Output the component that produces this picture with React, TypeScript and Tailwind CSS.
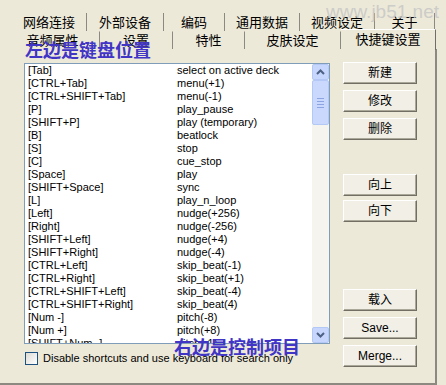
import React from 'react'

const rows: [string, string][] = [
  ['[Tab]', 'select on active deck'],
  ['[CTRL+Tab]', 'menu(+1)'],
  ['[CTRL+SHIFT+Tab]', 'menu(-1)'],
  ['[P]', 'play_pause'],
  ['[SHIFT+P]', 'play (temporary)'],
  ['[B]', 'beatlock'],
  ['[S]', 'stop'],
  ['[C]', 'cue_stop'],
  ['[Space]', 'play'],
  ['[SHIFT+Space]', 'sync'],
  ['[L]', 'play_n_loop'],
  ['[Left]', 'nudge(+256)'],
  ['[Right]', 'nudge(-256)'],
  ['[SHIFT+Left]', 'nudge(+4)'],
  ['[SHIFT+Right]', 'nudge(-4)'],
  ['[CTRL+Left]', 'skip_beat(-1)'],
  ['[CTRL+Right]', 'skip_beat(+1)'],
  ['[CTRL+SHIFT+Left]', 'skip_beat(-4)'],
  ['[CTRL+SHIFT+Right]', 'skip_beat(4)'],
  ['[Num -]', 'pitch(-8)'],
  ['[Num +]', 'pitch(+8)'],
  ['[SHIFT+Num -]', 'pitch(-1)'],
]

const topTabs: [string, string][] = [
  ['网络连接', 'w-[75px]'],
  ['外部设备', 'w-[77px]'],
  ['编码', 'w-[61px]'],
  ['通用数据', 'w-[75px]'],
  ['视频设定', 'w-[75px]'],
  ['关于', 'w-[60px]'],
]

const lowTabs: [string, string][] = [
  ['音频属性', 'w-[94px]'],
  ['设置', 'w-[73px]'],
  ['特性', 'w-[72px]'],
  ['皮肤设定', 'w-[96px]'],
]

function XpButton({ label, className = '' }: { label: string; className?: string }) {
  return (
    <div
      className={`flex h-[22px] w-[74px] items-center justify-center border border-t-white border-l-white border-r-[#716F64] border-b-[#716F64] bg-[#F1EFE6] text-[12px] text-black shadow-[inset_-1px_-1px_0_#ACA899] ${className}`}
    >
      {label}
    </div>
  )
}

function Chevron({ up }: { up: boolean }) {
  return (
    <svg width="9" height="6" viewBox="0 0 9 6">
      <path d={up ? 'M1 5 L4.5 1.5 L8 5' : 'M1 1 L4.5 4.5 L8 1'} fill="none" stroke="#4D6185" strokeWidth="2" />
    </svg>
  )
}

export default function App() {
  return (
    <div
      className="relative h-[385px] w-[446px] overflow-hidden bg-[#ECE9D8] text-black"
      style={{ fontFamily: '"Liberation Sans", "Noto Sans CJK SC", sans-serif' }}
    >
      {/* back row of tabs */}
      <div className="flex pl-[12px] pt-[13px]">
        {topTabs.map(([t, w]) => (
          <div
            key={t}
            className={`${w} flex h-[18px] items-center justify-center border-r border-r-[#8C8A80] text-[13px] leading-none`}
          >
            {t}
          </div>
        ))}
      </div>

      {/* front row of tabs */}
      <div className="flex h-[18px] items-end pl-[6px]">
        {lowTabs.map(([t, w]) => (
          <div
            key={t}
            className={`${w} flex h-[18px] items-center justify-center border-r border-r-[#8C8A80] border-t border-t-[#ECE9D8] text-[13px] leading-none`}
          >
            {t}
          </div>
        ))}
        <div className="relative z-10 -mb-px flex h-[21px] w-[95px] items-center justify-center border-r border-r-[#716F64] border-t border-t-white bg-[#ECE9D8] pb-[2px] text-[13px] leading-none">
          快捷键设置
        </div>
      </div>

      {/* page */}
      <div className="flex h-[336px] w-[437px] border-b-2 border-r-2 border-b-[#8C8A80] border-r-[#8C8A80] pl-[24px] pt-[14px]">
        <div className="flex h-[281px] w-[306px] border border-[#7F9DB9] bg-white">
          <div className="h-full flex-1 overflow-hidden text-[11px] leading-[13px]">
            {rows.map(([k, v]) => (
              <div key={k} className="flex h-[13px] pl-[3px]">
                <span className="w-[149px] shrink-0">{k}</span>
                <span>{v}</span>
              </div>
            ))}
          </div>
          <div className="flex w-[17px] flex-col bg-[#F5F4EF]">
            <div className="flex h-[16px] items-center justify-center rounded-[2px] border border-[#B4C8F6] bg-[#C6D6FC]">
              <Chevron up />
            </div>
            <div className="flex h-[45px] flex-col items-center justify-center gap-[2px] rounded-[2px] border border-[#B4C8F6] bg-[#C9D8FC]">
              <div className="h-px w-[7px] bg-[#8CA5E0]" />
              <div className="h-px w-[7px] bg-[#8CA5E0]" />
              <div className="h-px w-[7px] bg-[#8CA5E0]" />
              <div className="h-px w-[7px] bg-[#8CA5E0]" />
            </div>
            <div className="flex-1" />
            <div className="flex h-[16px] items-center justify-center rounded-[2px] border border-[#B4C8F6] bg-[#C6D6FC]">
              <Chevron up={false} />
            </div>
          </div>
        </div>

        <div className="ml-[13px] flex flex-col pt-[-1px]">
          <div className="-mt-px flex flex-col gap-[6px]">
            <XpButton label="新建" />
            <XpButton label="修改" />
            <XpButton label="删除" />
          </div>
          <div className="mt-[34px] flex flex-col gap-[4px]">
            <XpButton label="向上" />
            <XpButton label="向下" />
          </div>
          <div className="mt-[67px] flex flex-col gap-[6px]">
            <XpButton label="载入" />
            <XpButton label="Save..." className="text-[11px]" />
            <XpButton label="Merge..." className="text-[11px]" />
          </div>
        </div>
      </div>

      {/* checkbox row, lies inside page area */}
      <div className="absolute left-[25px] top-[350px] flex items-center gap-[5px] text-[11px]">
        <div className="h-[13px] w-[13px] border border-[#1C5180] bg-gradient-to-br from-[#DCDBD5] to-white" />
        <span>Disable shortcuts and use keyboard for search only</span>
      </div>

      {/* overlay annotations */}
      <div className="absolute left-[25px] top-[41px] text-[18px] font-bold leading-[20px] text-[#4135C6]">
        左边是键盘位置
      </div>
      <div className="absolute left-[174px] top-[338px] text-[18px] font-bold leading-[20px] text-[#4135C6]">
        右边是控制项目
      </div>
      <div className="absolute left-[326px] top-[1px] text-[19px] leading-[22px] text-[#C4C4C4]/80">
        www.jb51.net
      </div>
    </div>
  )
}
